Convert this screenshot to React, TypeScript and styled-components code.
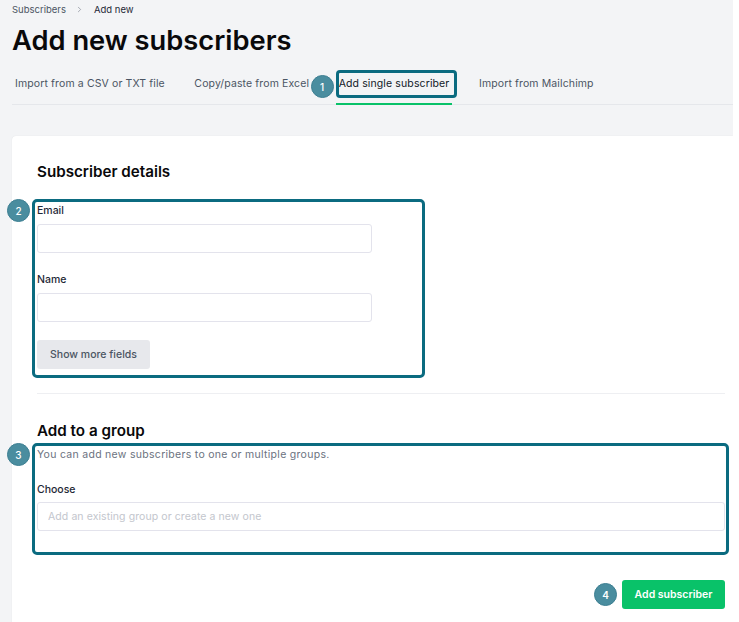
import React from 'react';
import styled, {createGlobalStyle} from 'styled-components';
import {ChevronRight} from 'lucide-react';

const tabs = [
  'Import from a CSV or TXT file',
  'Copy/paste from Excel',
  'Add single subscriber',
  'Import from Mailchimp',
];

const App = () => {
  return (
    <>
      <GlobalStyle />
      <Page>
        <Breadcrumbs>
          <Crumb>Subscribers</Crumb>
          <Separator>
            <ChevronRight size={9} strokeWidth={1.5} />
          </Separator>
          <Crumb $current>Add new</Crumb>
        </Breadcrumbs>
        <Title>Add new subscribers</Title>
        <Tabs>
          {tabs.map((name, id) => {
            const active = id === 2;
            return (
              <Tab key={id} $active={active}>
                {name}
                {active && (
                  <>
                    <TabOutline />
                    <TabBadge>1</TabBadge>
                  </>
                )}
              </Tab>
            );
          })}
        </Tabs>
        <Card>
          <SectionTitle>Subscriber details</SectionTitle>
          <DetailsFields>
            <Outline $top={-4} $right={-53} $bottom={-9} />
            <SideBadge $top={-4}>2</SideBadge>
            <Field>
              <Label>Email</Label>
              <TextInput />
            </Field>
            <Field>
              <Label>Name</Label>
              <TextInput />
            </Field>
            <MoreButton>Show more fields</MoreButton>
          </DetailsFields>
          <Divider />
          <GroupTitle>Add to a group</GroupTitle>
          <GroupFields>
            <Outline $top={-5} $right={-4} $bottom={-24} />
            <SideBadge $top={-5}>3</SideBadge>
            <Description>You can add new subscribers to one or multiple groups.</Description>
            <Label>Choose</Label>
            <GroupInput placeholder='Add an existing group or create a new one' />
          </GroupFields>
          <Actions>
            <ActionBadge>4</ActionBadge>
            <SubmitButton>Add subscriber</SubmitButton>
          </Actions>
        </Card>
      </Page>
    </>
  );
};

const GlobalStyle = createGlobalStyle`
  html, body {
    margin: 0;
    padding: 0;
    background: #ffffff;
  }
  * {
    box-sizing: border-box;
  }
`;

const Page = styled.div`
  width: 733px;
  height: 622px;
  overflow: hidden;
  padding: 3px 0 0 12px;
  background: #f3f4f6;
  font-family: 'Inter', sans-serif;
  color: #111827;
`;

const Breadcrumbs = styled.div`
  display: flex;
  align-items: center;
  height: 13px;
  font-size: 9.5px;
  line-height: 13px;
`;

const Crumb = styled.span<{$current?: boolean}>`
  color: ${(props) => (props.$current ? '#1f2937' : '#4b5563')};
`;

const Separator = styled.span`
  display: flex;
  margin: 0 9.5px;
  color: #6b7280;
`;

const Title = styled.h1`
  margin: 7px 0 0;
  font-size: 27.3px;
  line-height: 36px;
  font-weight: 600;
  color: #09090b;
`;

const Tabs = styled.div`
  display: flex;
  gap: 23.5px;
  height: 46px;
  border-bottom: 1px solid #e5e7eb;
`;

const Tab = styled.div<{$active: boolean}>`
  position: relative;
  height: 46px;
  padding: 18px 3px 0;
  font-size: 10.5px;
  line-height: 14px;
  letter-spacing: 0.12px;
  white-space: nowrap;
  color: ${(props) => (props.$active ? '#111827' : '#4b5563')};
  border-bottom: 2px solid ${(props) => (props.$active ? '#09c269' : 'transparent')};
`;

const TabOutline = styled.span`
  position: absolute;
  top: 11px;
  left: 0;
  width: 121px;
  height: 28px;
  border: 3px solid #0b6b80;
  border-radius: 4px;
`;

const Badge = styled.span`
  display: flex;
  align-items: center;
  justify-content: center;
  width: 23px;
  height: 23px;
  border: 1px solid #3d7f92;
  border-radius: 50%;
  background: #4a8d9f;
  color: #ffffff;
  font-size: 10px;
  font-weight: 500;
  letter-spacing: 0;
`;

const TabBadge = styled(Badge)`
  position: absolute;
  top: 16px;
  left: -25px;
  line-height: 1;
`;

const Card = styled.div`
  margin-top: 31px;
  height: 500px;
  padding: 26px 8px 0 25px;
  background: #ffffff;
  border-radius: 4px 0 0 0;
  box-shadow: 0 0 1px rgba(17, 24, 39, 0.12);
`;

const SectionTitle = styled.h2`
  margin: 0;
  height: 20px;
  font-size: 15.2px;
  line-height: 20px;
  font-weight: 600;
  color: #09090b;
`;

const GroupTitle = styled(SectionTitle)`
  margin-top: 27px;
`;

const DetailsFields = styled.div`
  position: relative;
  margin-top: 21px;
  display: flex;
  flex-direction: column;
  align-items: flex-start;
  width: 335px;
`;

const Outline = styled.span<{$top: number; $right: number; $bottom: number}>`
  position: absolute;
  top: ${(props) => props.$top}px;
  left: -5px;
  right: ${(props) => props.$right}px;
  bottom: ${(props) => props.$bottom}px;
  border: 3px solid #0b6b80;
  border-radius: 5px;
  pointer-events: none;
`;

const SideBadge = styled(Badge)<{$top: number}>`
  position: absolute;
  top: ${(props) => props.$top}px;
  left: -30px;
`;

const Field = styled.div`
  width: 100%;
  & + & {
    margin-top: 19px;
  }
`;

const Label = styled.div`
  height: 14px;
  padding-top: 1px;
  font-size: 10.5px;
  line-height: 14px;
  font-weight: 500;
  color: #1f2937;
`;

const TextInput = styled.input`
  display: block;
  width: 100%;
  height: 29px;
  margin-top: 7px;
  border: 1px solid #e3e3ec;
  border-radius: 3px;
  background: #ffffff;
  outline: none;
`;

const MoreButton = styled.button`
  width: 113px;
  height: 29px;
  margin-top: 18px;
  padding: 0;
  border: none;
  border-radius: 3px;
  background: #e7e8ec;
  color: #4b5563;
  font-family: 'Inter', sans-serif;
  font-size: 10.5px;
  font-weight: 500;
`;

const Divider = styled.div`
  height: 1px;
  margin-top: 24px;
  background: #eeeff2;
`;

const GroupFields = styled.div`
  position: relative;
  margin-top: 7px;
`;

const Description = styled.p`
  margin: 0 0 20px;
  height: 14px;
  font-size: 10.5px;
  line-height: 14px;
  letter-spacing: 0.29px;
  color: #6b7280;
`;

const GroupInput = styled.input`
  display: block;
  width: 100%;
  height: 29px;
  margin-top: 6px;
  padding: 0 10px;
  border: 1px solid #e3e3ec;
  border-radius: 3px;
  background: #ffffff;
  font-family: 'Inter', sans-serif;
  font-size: 10.5px;
  letter-spacing: 0.08px;
  outline: none;
  &::placeholder {
    color: #c3c6cd;
    opacity: 1;
  }
`;

const Actions = styled.div`
  display: flex;
  align-items: center;
  justify-content: flex-end;
  gap: 5px;
  margin-top: 49px;
`;

const ActionBadge = styled(Badge)`
  font-weight: 600;
`;

const SubmitButton = styled.button`
  width: 103px;
  height: 29px;
  padding: 0;
  border: none;
  border-radius: 3px;
  background: #09c269;
  color: #ffffff;
  font-family: 'Inter', sans-serif;
  font-size: 10.5px;
  font-weight: 600;
`;

export default App;
